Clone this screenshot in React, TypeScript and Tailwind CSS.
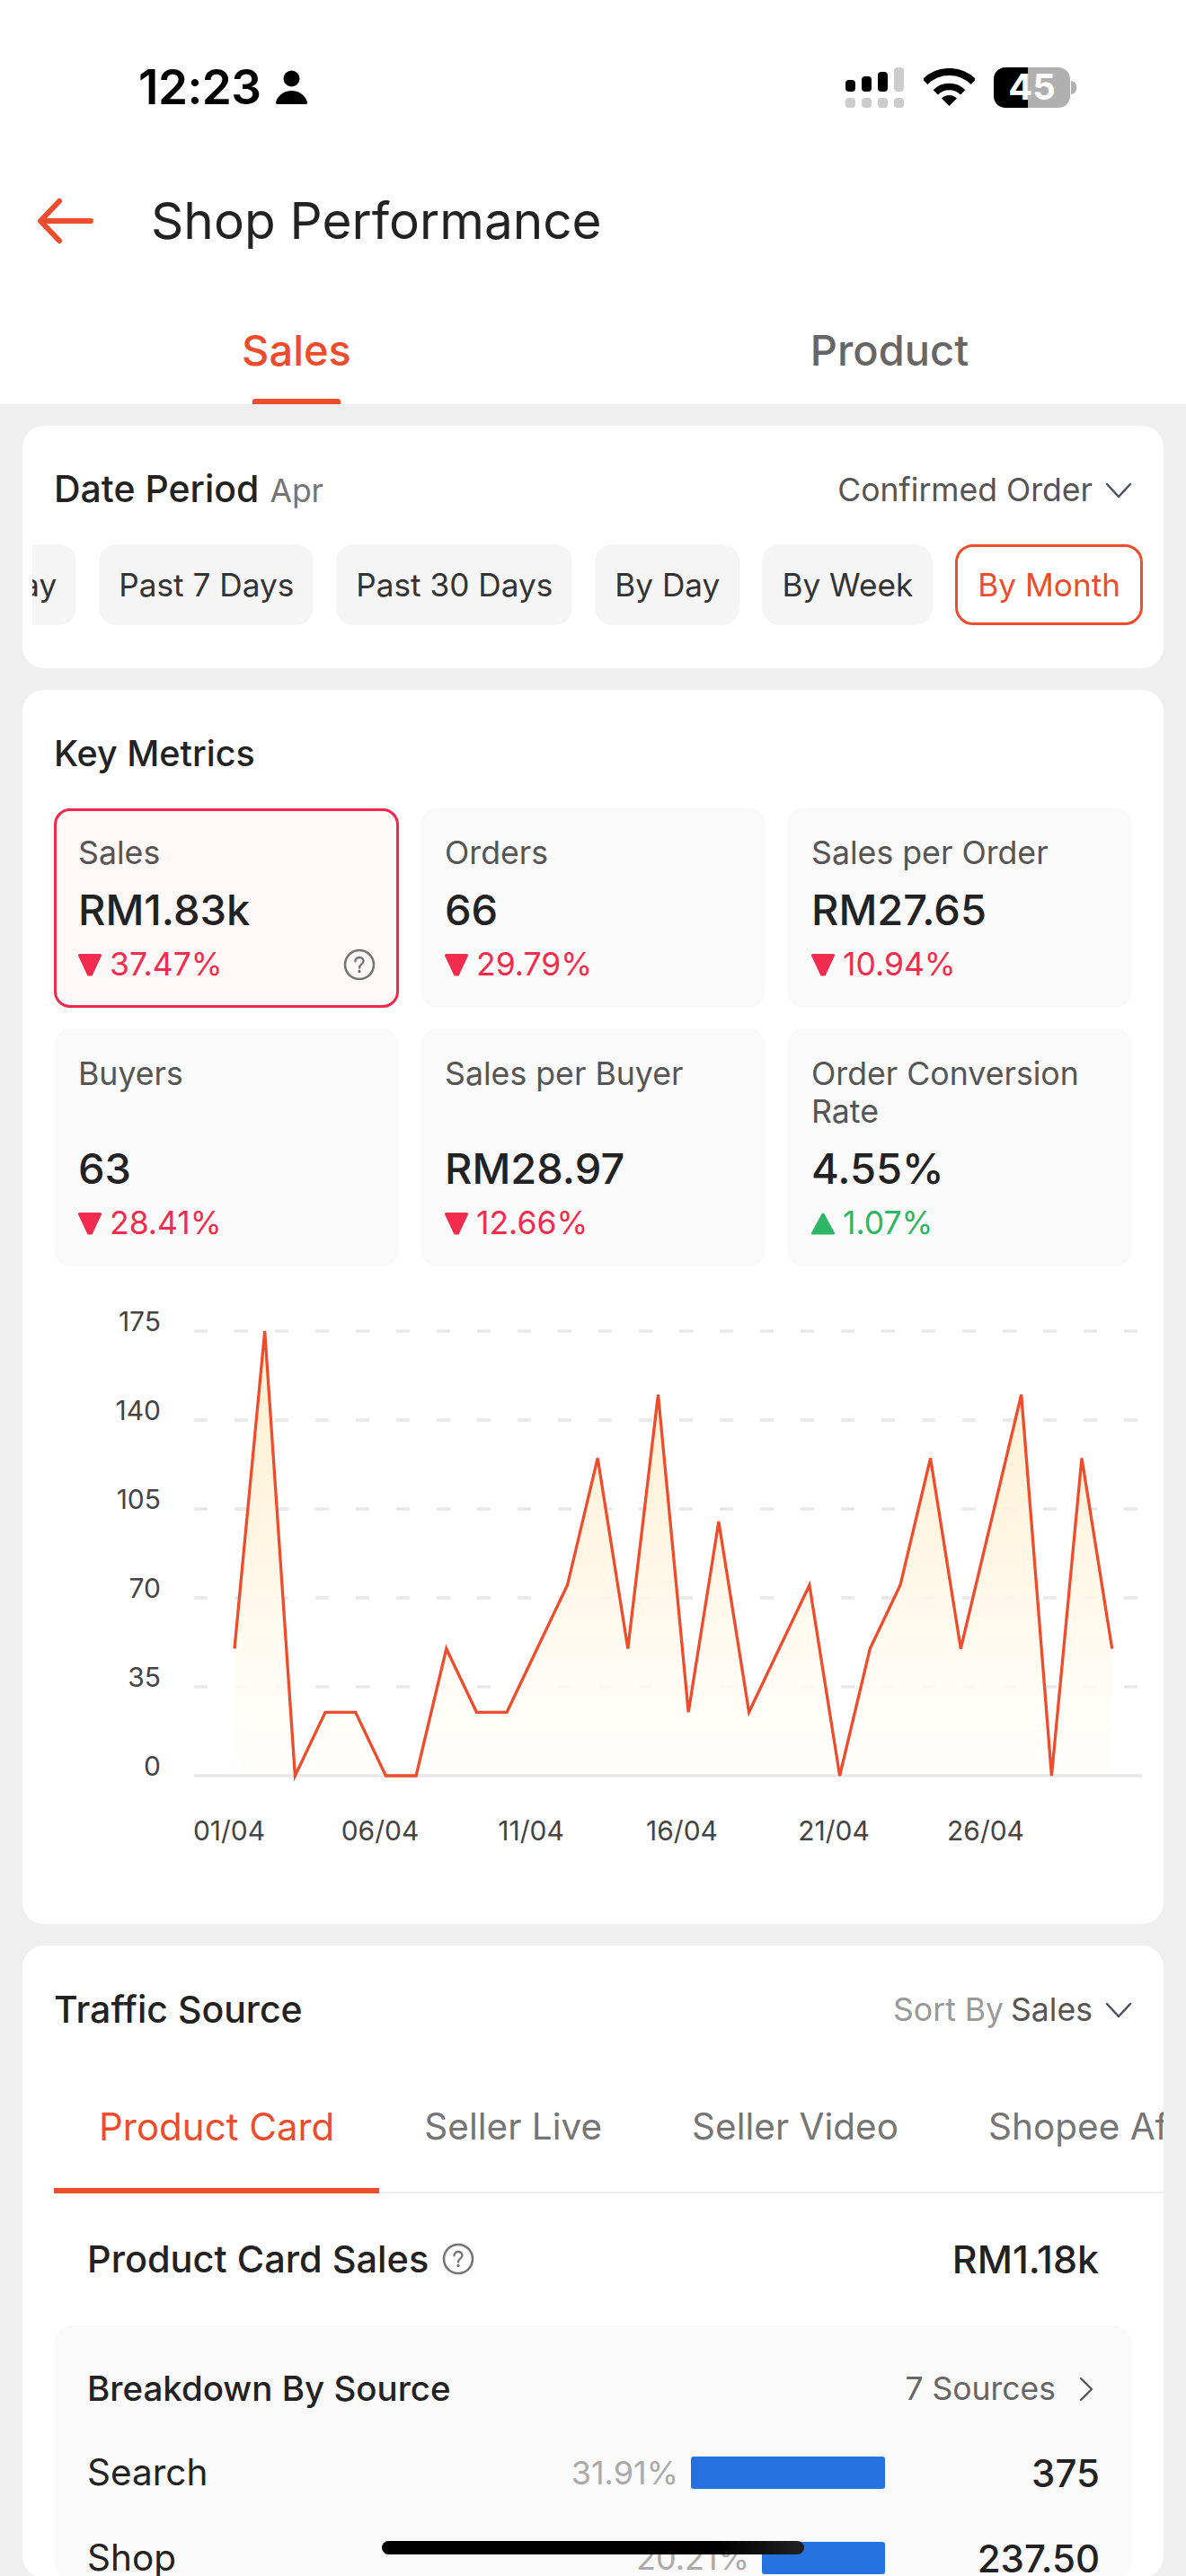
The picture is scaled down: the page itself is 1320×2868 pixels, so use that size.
import React from "react";

const vals = [50,175,0,25,25,0,0,50,25,25,50,75,125,50,150,25,100,25,50,75,0,50,75,125,50,100,150,0,125,50];
const px = (i: number) => 261 + i * 33.68;
const py = (v: number) => 1977 - v * 2.829;
const line = vals.map((v, i) => `${px(i).toFixed(1)},${py(v).toFixed(1)}`).join(" ");
const area = `M${px(0)},1977 L${line.split(" ").join(" L")} L${px(29)},1977 Z`;

function Chevron() {
  return (
    <svg width="30" height="18" viewBox="0 0 30 18" fill="none">
      <path d="M2 2 L15 16 L28 2" stroke="#4b5060" strokeWidth="2.5" strokeLinecap="round" strokeLinejoin="round" />
    </svg>
  );
}

function Help({ size = 36 }: { size?: number }) {
  return (
    <svg width={size} height={size} viewBox="0 0 36 36" fill="none">
      <circle cx="18" cy="18" r="16" stroke="#757575" strokeWidth="2.6" />
      <path d="M13.5 14.2 C13.5 11.5 15.5 10 18 10 C20.6 10 22.5 11.6 22.5 14 C22.5 17.4 18 17.4 18 21.5" stroke="#757575" strokeWidth="2.4" strokeLinecap="round" />
      <circle cx="18" cy="25.5" r="1.7" fill="#757575" />
    </svg>
  );
}

function Tri({ up }: { up?: boolean }) {
  return (
    <svg width="26" height="25" viewBox="0 0 26 25" className="shrink-0">
      {up ? (
        <path d="M13 2 L24.5 23 L1.5 23 Z" fill="#2fb566" stroke="#2fb566" strokeWidth="3" strokeLinejoin="round" />
      ) : (
        <path d="M1.5 1.5 L24.5 1.5 L14.5 23 L11.5 23 Z" fill="#f22c4e" stroke="#f22c4e" strokeWidth="3" strokeLinejoin="round" />
      )}
    </svg>
  );
}

function Tile({ label, value, pct, up, active }: { label: string; value: string; pct: string; up?: boolean; active?: boolean }) {
  return (
    <div className={`flex flex-col rounded-[18px] ${active ? "border-[3px] border-[#f0284b] bg-[#fff8f8] px-[24px] pt-[25px] pb-[24px]" : "bg-[#fafafa] px-[27px] pt-[28px] pb-[27px]"}`}>
      <div className="text-[35.7px] leading-[42px] text-[#555555]">{label}</div>
      <div className="mt-auto pt-[14px] text-[47px] leading-[58px] font-medium text-[#222222]">{value}</div>
      <div className={`mt-[11px] flex items-center gap-[9px] text-[35.5px] leading-[42px] ${up ? "text-[#2fb566]" : "text-[#f22c4e]"}`}>
        <Tri up={up} />
        <span>{pct}</span>
        {active && <span className="-mr-[1px] ml-auto flex"><Help /></span>}
      </div>
    </div>
  );
}

function Pill({ children, active }: { children: React.ReactNode; active?: boolean }) {
  return (
    <div className={`flex h-[90px] shrink-0 items-center rounded-[20px] text-[35.2px] whitespace-nowrap ${active ? "border-[3px] border-[#ee4d2d] bg-white px-[22px] text-[#ee4d2d]" : "bg-[#f5f5f5] px-[22px] text-[#333333]"}`}>
      {children}
    </div>
  );
}

function BarRow({ label, pct, width, value }: { label: string; pct: string; width: number; value: string }) {
  return (
    <div className="flex h-[44px] items-center">
      <div className="flex-1 text-[40.5px] text-[#222222]">{label}</div>
      <div className="mr-[14px] text-[36px] text-[#aaaaaa]">{pct}</div>
      <div className="h-[36px] rounded-[3px] bg-[#2671e0]" style={{ width }} />
      <div className="-mr-[1px] w-[239px] text-right text-[42px] font-medium text-[#222222]">{value}</div>
    </div>
  );
}

function StatusBar() {
  return (
    <div className="flex h-[194px] items-center justify-between pr-[122px] pl-[154px]">
      <div className="flex items-center gap-[16px]">
        <span className="text-[53px] leading-none font-semibold tracking-[-0.5px] text-black">12:23</span>
        <svg width="35" height="38" viewBox="0 0 35 38">
          <circle cx="17.5" cy="9.5" r="9" fill="#000" />
          <path d="M2 38 C-1 38 0 35 1 33 C4 27 10 23 17.5 23 C25 23 31 27 34 33 C35 35 36 38 33 38 Z" fill="#000" />
        </svg>
      </div>
      <div className="flex items-center gap-[21px]">
        <svg width="66" height="45" viewBox="0 0 66 45">
          <rect x="0" y="34" width="11" height="11" rx="3.5" fill="#cccccc" />
          <rect x="18" y="34" width="11" height="11" rx="3.5" fill="#cccccc" />
          <rect x="36" y="34" width="11" height="11" rx="3.5" fill="#cccccc" />
          <rect x="54" y="34" width="11" height="11" rx="3.5" fill="#cccccc" />
          <rect x="0" y="14" width="11" height="13" rx="4" fill="#000" />
          <rect x="18" y="10" width="11" height="17" rx="4" fill="#000" />
          <rect x="36" y="5" width="11" height="22" rx="4" fill="#000" />
          <rect x="54" y="0" width="11" height="27" rx="4" fill="#cccccc" />
        </svg>
        <svg width="57" height="42" viewBox="0 0 57 42" fill="none">
          <path d="M1.6 15.1 A38 38 0 0 1 55.4 15.1" stroke="#000" strokeWidth="8" />
          <path d="M13.3 26.8 A21.5 21.5 0 0 1 43.7 26.8" stroke="#000" strokeWidth="7.5" />
          <path d="M28.5 42 L20 33.5 A12 12 0 0 1 37 33.5 Z" fill="#000" />
        </svg>
        <div className="flex items-center gap-[1px]">
          <div className="flex h-[45px] w-[85px] items-center justify-center rounded-[13px] bg-[linear-gradient(90deg,#000_45%,#b0b0b0_45%)] text-[40px] leading-none font-bold text-white">45</div>
          <div className="h-[15px] w-[6px] rounded-r-full bg-[#b0b0b0]" />
        </div>
      </div>
    </div>
  );
}

export default function App() {
  return (
    <div className="relative h-[2868px] w-[1320px] overflow-hidden bg-[#efefef] font-['Inter','Noto_Sans',sans-serif]">
      <header className="bg-white">
        <StatusBar />
        <div className="flex h-[104px] items-center pl-[42px]">
          <svg width="64" height="56" viewBox="0 0 64 56" fill="none">
            <path d="M24 6 L3 28 L24 50 M3 28 L59 28" stroke="#ee4d2d" strokeWidth="6" strokeLinecap="round" strokeLinejoin="round" />
          </svg>
          <h1 className="ml-[62px] text-[56.7px] leading-none text-[#222222]">Shop Performance</h1>
        </div>
        <div className="grid h-[152px] grid-cols-2">
          <div className="flex flex-col items-center pt-[62px]">
            <div className="text-[47px] leading-[60px] font-medium text-[#ee4d2d]">Sales</div>
            <div className="mt-auto h-[6px] w-[98px] rounded-t-[3px] bg-[#ee4d2d]" />
          </div>
          <div className="flex flex-col items-center pt-[62px]">
            <div className="text-[47px] leading-[60px] font-medium text-[#666666]">Product</div>
          </div>
        </div>
      </header>

      <main className="flex flex-col gap-[24px] px-[25px] pt-[24px]">
        <section className="rounded-[24px] bg-white pt-[47px] pb-[48px]">
          <div className="mx-[35px] flex h-[48px] items-center justify-between">
            <div className="flex items-baseline gap-[12px]">
              <span className="text-[41px] font-medium text-[#222222]">Date Period</span>
              <span className="text-[35.5px] text-[#757575]">Apr</span>
            </div>
            <div className="flex items-center gap-[14px] pt-[2px] text-[35.6px] text-[#555555]">
              <span>Confirmed Order</span>
              <Chevron />
            </div>
          </div>
          <div className="mt-[37px] mr-[23px] ml-[11px] flex justify-end gap-[25px] overflow-hidden">
            <Pill>Yesterday</Pill>
            <Pill>Past 7 Days</Pill>
            <Pill>Past 30 Days</Pill>
            <Pill>By Day</Pill>
            <Pill>By Week</Pill>
            <Pill active>By Month</Pill>
          </div>
        </section>

        <section className="rounded-[24px] bg-white pt-[48px]">
          <div className="mx-[35px] flex h-[48px] items-center text-[39.5px] font-medium text-[#222222]">Key Metrics</div>
          <div className="mx-[35px] mt-[36px] grid grid-cols-3 gap-[24px]">
            <Tile active label="Sales" value="RM1.83k" pct="37.47%" />
            <Tile label="Orders" value="66" pct="29.79%" />
            <Tile label="Sales per Order" value="RM27.65" pct="10.94%" />
            <Tile label="Buyers" value="63" pct="28.41%" />
            <Tile label="Sales per Buyer" value="RM28.97" pct="12.66%" />
            <Tile up label="Order Conversion Rate" value="4.55%" pct="1.07%" />
          </div>
          <svg width="1270" height="732" viewBox="25 1410 1270 732" className="block" fontFamily="Inter, sans-serif">
            <defs>
              <linearGradient id="fill" x1="0" y1="1482" x2="0" y2="1977" gradientUnits="userSpaceOnUse">
                <stop offset="0" stopColor="#ffeecb" />
                <stop offset="0.34" stopColor="#fff2d8" />
                <stop offset="0.6" stopColor="#fff8e8" />
                <stop offset="0.85" stopColor="#fffdf6" />
                <stop offset="1" stopColor="#fffefc" />
              </linearGradient>
            </defs>
            {[1482, 1581, 1680, 1779, 1878].map((y) => (
              <line key={y} x1="216" x2="1271" y1={y} y2={y} stroke="#e8e8e8" strokeWidth="3.5" strokeDasharray="15 30" />
            ))}
            <path d={area} fill="url(#fill)" opacity="0.88" />
            <line x1="216" x2="1271" y1="1977" y2="1977" stroke="#e8e8e8" strokeWidth="3.5" />
            <polyline points={line} fill="none" stroke="#ee4d2d" strokeWidth="3.3" strokeLinejoin="miter" />
            {([["175",1472],["140",1571],["105",1670],["70",1769],["35",1868],["0",1967]] as [string, number][]).map(([t, y]) => (
              <text key={t} x="179" y={y + 10} textAnchor="end" fontSize="30" fill="#444444">{t}</text>
            ))}
            {([["01/04",255],["06/04",423],["11/04",591],["16/04",759],["21/04",928],["26/04",1097]] as [string, number][]).map(([t, x]) => (
              <text key={t} x={x} y="2049" textAnchor="middle" fontSize="30" fill="#444444">{t}</text>
            ))}
          </svg>
        </section>

        <section className="overflow-hidden rounded-[24px] bg-white pt-[48px]">
          <div className="mx-[35px] flex h-[48px] items-center justify-between">
            <span className="text-[41px] font-medium text-[#222222]">Traffic Source</span>
            <div className="flex items-center gap-[14px] text-[35.6px]">
              <span className="flex gap-[8px]"><span className="text-[#999999]">Sort By</span><span className="text-[#555555]">Sales</span></span>
              <Chevron />
            </div>
          </div>
          <div className="mt-[80px] ml-[35px] flex h-[100px] border-b-2 border-[#eeeeee] text-[40.5px] leading-[52px] whitespace-nowrap text-[#757575]">
            <div className="-mb-[2px] shrink-0 border-b-[6px] border-[#ee4d2d] px-[50px] text-[42px] text-[#ee4d2d]">Product Card</div>
            <div className="shrink-0 px-[50px]">Seller Live</div>
            <div className="shrink-0 px-[50px]">Seller Video</div>
            <div className="shrink-0 px-[50px]">Shopee Affiliate</div>
          </div>
          <div className="mt-[49px] mr-[72px] ml-[72px] flex h-[48px] items-center justify-between text-[#222222]">
            <div className="flex items-center gap-[15px]">
              <span className="text-[41.5px] font-medium">Product Card Sales</span>
              <Help />
            </div>
            <span className="text-[43px] font-medium">RM1.18k</span>
          </div>
          <div className="mx-[35px] mt-[50px] rounded-[20px] bg-[#fafafa] px-[37px] pt-[49px]">
            <div className="flex h-[44px] items-center justify-between">
              <span className="text-[38.5px] font-medium text-[#222222]">Breakdown By Source</span>
              <div className="flex items-center gap-[26px] text-[35.5px] text-[#666666]">
                <span>7 Sources</span>
                <svg width="16" height="28" viewBox="0 0 16 28" fill="none" className="mr-[6px]">
                  <path d="M2 2 L14 14 L2 26" stroke="#555555" strokeWidth="2.4" strokeLinecap="round" strokeLinejoin="round" />
                </svg>
              </div>
            </div>
            <div className="mt-[49px] flex flex-col gap-[51px]">
              <BarRow label="Search" pct="31.91%" width={216} value="375" />
              <BarRow label="Shop" pct="20.21%" width={137} value="237.50" />
            </div>
          </div>
        </section>
      </main>

      <div className="absolute bottom-[24px] left-[425px] h-[15px] w-[470px] rounded-full bg-[linear-gradient(90deg,#000_80%,#222_100%)]" />
    </div>
  );
}
